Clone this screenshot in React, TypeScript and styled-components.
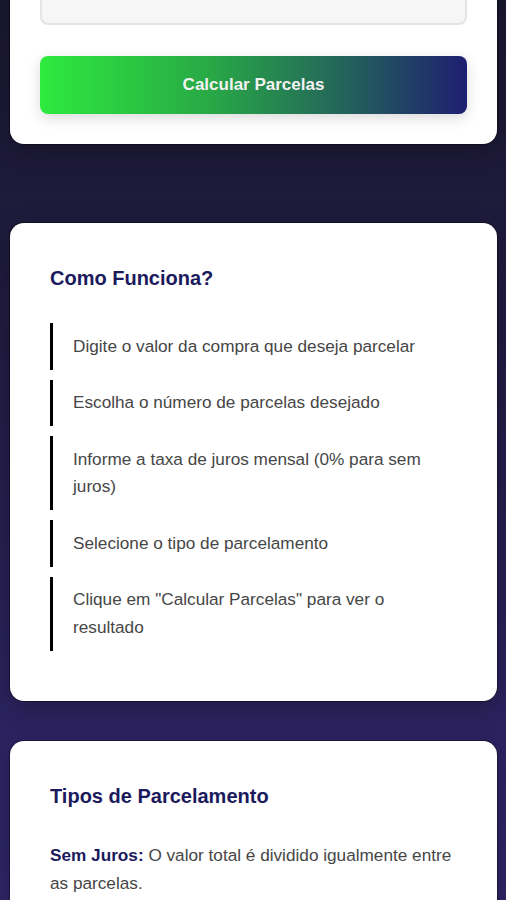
import React from "react";
import styled, { createGlobalStyle } from "styled-components";

const GlobalStyle = createGlobalStyle`
  html, body {
    margin: 0;
    padding: 0;
  }
  body {
    font-family: "Liberation Sans", Arial, sans-serif;
    background: linear-gradient(180deg, #1a1830 0%, #211c42 35%, #2d2463 80%, #30276a 100%);
    min-height: 900px;
    overflow: hidden;
  }
`;

const Page = styled.main`
  display: flex;
  flex-direction: column;
  padding: 0 9px 0 10px;
`;

const Card = styled.section<{ $pad: number; $gapAfter: number; $shift?: number }>`
  background: #ffffff;
  border-radius: 14px;
  padding: ${(p) => p.$pad}px;
  margin-top: ${(p) => p.$shift ?? 0}px;
  margin-bottom: ${(p) => p.$gapAfter}px;
  box-shadow: 0 0 0 1px rgba(0, 0, 0, 0.35), 0 8px 24px rgba(0, 0, 0, 0.25);
`;

const Field = styled.div`
  display: flex;
  flex-direction: column;
  gap: 8px;
`;

const Label = styled.label`
  font-size: 15px;
  font-weight: bold;
  color: #1a1a5e;
`;

const Input = styled.input`
  height: 50px;
  box-sizing: border-box;
  border: 2px solid #e4e4e4;
  border-radius: 8px;
  background: #f6f6f6;
  font: inherit;
  font-size: 16px;
  padding: 0 14px;
`;

const CalcButton = styled.button`
  margin-top: 31px;
  height: 58px;
  border: none;
  border-radius: 8px;
  background: linear-gradient(90deg, #2eea3e 0%, #28a846 40%, #24665a 70%, #1e1f70 100%);
  color: #f2f2f2;
  font-family: "Liberation Sans", Arial, sans-serif;
  font-size: 17px;
  font-weight: bold;
  box-shadow: 0 4px 14px rgba(0, 0, 0, 0.15);
  cursor: pointer;
`;

const Title = styled.h2`
  margin: 4px 0 33px;
  font-size: 20px;
  font-weight: bold;
  color: #1b1a5c;
  line-height: 23px;
`;

const Steps = styled.ul`
  list-style: none;
  margin: 0 0 10px;
  padding: 0;
  display: flex;
  flex-direction: column;
  gap: 10px;
`;

const Step = styled.li`
  border-left: 3px solid #000;
  padding: 9.5px 24px 9.5px 20px;
  font-size: 17.2px;
  line-height: 1.6;
  color: #464646;
`;

const Para = styled.p`
  margin: 1px 0 0;
  font-size: 17.2px;
  line-height: 28px;
  color: #464646;
`;

const Strong = styled.strong`
  color: #1b1a5c;
`;

const steps = [
  "Digite o valor da compra que deseja parcelar",
  "Escolha o número de parcelas desejado",
  "Informe a taxa de juros mensal (0% para sem juros)",
  "Selecione o tipo de parcelamento",
  'Clique em "Calcular Parcelas" para ver o resultado',
];

export default function App() {
  return (
    <>
      <GlobalStyle />
      <Page>
        <Card $pad={30} $gapAfter={79} $shift={-80}>
          <Field>
            <Label htmlFor="tipo">Tipo de Parcelamento</Label>
            <Input id="tipo" readOnly value="" />
          </Field>
          <Field>
            <CalcButton type="button">Calcular Parcelas</CalcButton>
          </Field>
        </Card>
        <Card $pad={40} $gapAfter={40}>
          <Title>Como Funciona?</Title>
          <Steps>
            {steps.map((s) => (
              <Step key={s}>{s}</Step>
            ))}
          </Steps>
        </Card>
        <Card $pad={40} $gapAfter={40}>
          <Title>Tipos de Parcelamento</Title>
          <Para>
            <Strong>Sem Juros:</Strong> O valor total é dividido igualmente entre as parcelas.
          </Para>
        </Card>
      </Page>
    </>
  );
}
